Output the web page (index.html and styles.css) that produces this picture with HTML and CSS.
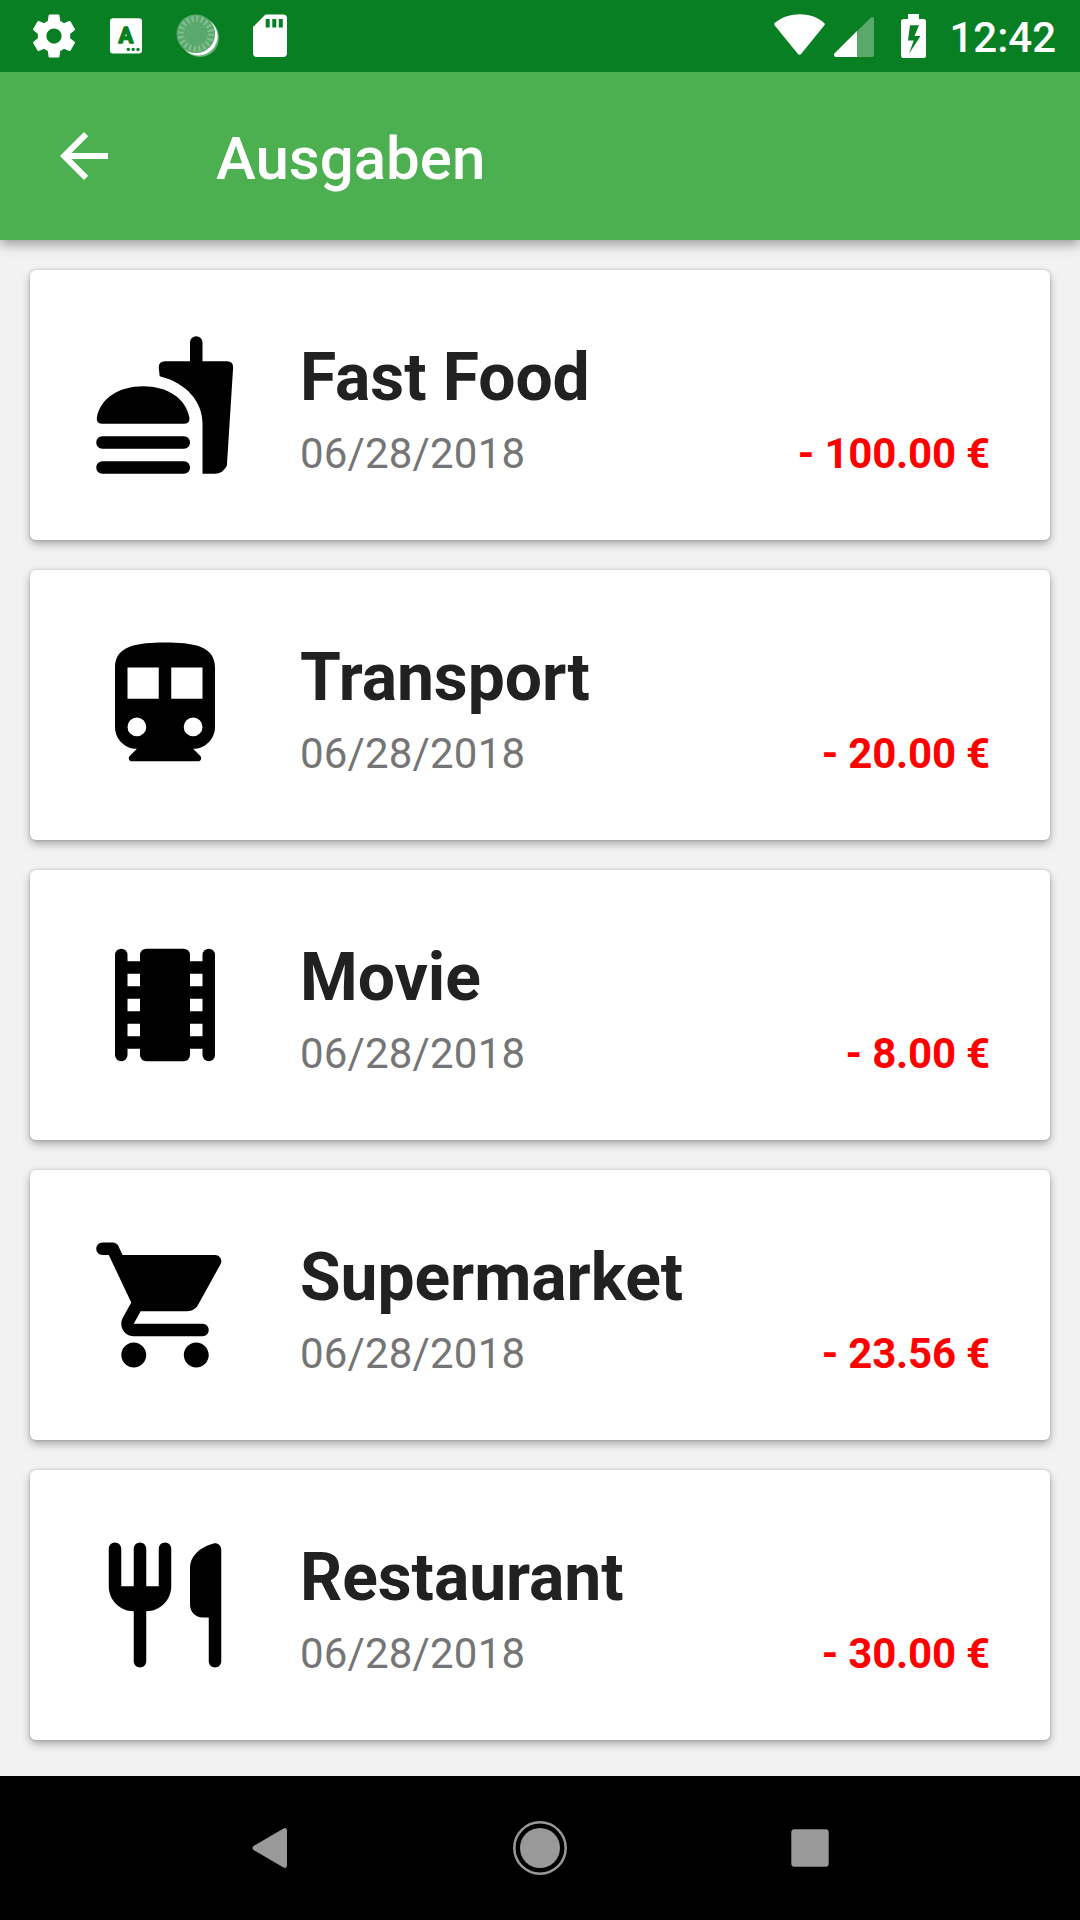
FILE: index.html
```html
<!DOCTYPE html>
<html lang="de">
<head>
<meta charset="utf-8">
<title>Ausgaben</title>
<link rel="stylesheet" href="styles.css">
</head>
<body>
<div class="status-bar">
  <div class="status-group">
    <svg class="status-icon" viewBox="0 0 72 72"><path fill="#fff" transform="translate(10.1 10.1) scale(2.16)" d="M19.43 12.98c.04-.32.07-.64.07-.98s-.03-.66-.07-.98l2.11-1.65c.19-.15.24-.42.12-.64l-2-3.46c-.12-.22-.39-.3-.61-.22l-2.49 1c-.52-.4-1.08-.73-1.69-.98l-.38-2.65C14.46 2.18 14.25 2 14 2h-4c-.25 0-.46.18-.49.42l-.38 2.65c-.61.25-1.17.59-1.69.98l-2.49-1c-.23-.09-.49 0-.61.22l-2 3.46c-.13.22-.07.49.12.64l2.11 1.65c-.04.32-.07.65-.07.98s.03.66.07.98l-2.11 1.65c-.19.15-.24.42-.12.64l2 3.46c.12.22.39.3.61.22l2.49-1c.52.4 1.08.73 1.69.98l.38 2.65c.03.24.24.42.49.42h4c.25 0 .46-.18.49-.42l.38-2.65c.61-.25 1.17-.59 1.69-.98l2.49 1c.23.09.49 0 .61-.22l2-3.46c.12-.22.07-.49-.12-.64l-2.11-1.65zM12 15.5c-1.93 0-3.5-1.57-3.5-3.5s1.57-3.5 3.5-3.5 3.5 1.57 3.5 3.5-1.57 3.5-3.5 3.5z"/></svg>
    <svg class="status-icon" viewBox="0 0 72 72"><rect x="20" y="18.3" width="32" height="35.3" rx="3" fill="#fff"/><text class="badge-letter" x="36" y="43" text-anchor="middle">A</text><g fill="#087f23"><circle cx="38.3" cy="49.4" r="1.7"/><circle cx="43.2" cy="49.4" r="1.7"/><circle cx="48" cy="49.4" r="1.7"/></g></svg>
    <svg class="status-icon" viewBox="0 0 72 72"><circle cx="37.8" cy="37.8" r="19.2" fill="#fff" opacity=".4"/><circle cx="36.4" cy="36.2" r="19.2" fill="#fff"/><circle cx="33.8" cy="33.8" r="19.3" fill="#5aa96c"/><circle cx="33.8" cy="33.8" r="15" fill="none" stroke="#84bf92" stroke-width="6" stroke-dasharray="2 2.712"/></svg>
    <svg class="status-icon" viewBox="0 0 72 72"><path fill="#fff" d="M31.5 14.5H49a4 4 0 0 1 4 4V53a4 4 0 0 1-4 4H23a4 4 0 0 1-4-4V27z"/><path fill="#087f23" d="M31.7 19h4v8.5h-4zM38.3 19h4v8.5h-4zM44.8 19h4v8.5h-4z"/></svg>
  </div>
  <div class="status-group">
    <svg class="wifi" viewBox="0 0 52 72"><path fill="#fff" d="M.8 25.5Q-.5 24 1 22.7C15 11.5 37 11.5 50 22.7Q51.5 24 50.2 25.5L27.5 53.5Q25.5 56 23.500 53.5z"/></svg>
    <svg class="signal" viewBox="0 0 40 72"><path fill="#fff" opacity=".33" d="M40 19v36a2 2 0 0 1-2 2H2q-3-.8-1.5-3.5L36.7 17.7Q39.5 16 40 19z"/><path fill="#fff" d="M23 31v26H2q-3-.8-1.5-3.5z"/></svg>
    <svg class="battery" viewBox="0 0 25 72"><path fill="#fff" fill-rule="evenodd" d="M7 14h11v5h4.5A2.5 2.5 0 0 1 25 21.5v34a2.5 2.5 0 0 1-2.5 2.5h-20A2.5 2.5 0 0 1 0 55.5v-34A2.5 2.5 0 0 1 2.5 19H7zM9 25.3 7 40.5h5.7L8 53.7 19.5 36h-6L18 25.3z"/></svg>
    <span class="clock">12:42</span>
  </div>
</div>
<header class="app-bar">
  <svg class="back" viewBox="0 0 24 24"><path fill="#fff" d="M20 11H7.83l5.59-5.59L12 4l-8 8 8 8 1.41-1.41L7.83 13H20v-2z"/></svg>
  <h1 class="app-title">Ausgaben</h1>
</header>
<main class="list">
  <article class="card">
    <svg class="card-icon" viewBox="0 0 24 24"><path d="M16 5V2a1 1 0 0 1 2 0v3h3.9q1 0 1 1l-1 15.7Q21.2 23 20 23h-2v-8c0-3.5-2.5-6.5-6.85-7.6L11 6q0-1 1-1zM1.08 14.1C1.6 10.9 4.7 9 8.5 9s6.9 1.9 7.42 5.1q0 .9-.9.9H1.98q-.9 0-.9-.9z"/><rect x="1" y="17" width="15" height="2" rx=".95"/><rect x="1" y="21" width="15" height="2" rx=".95"/></svg>
    <div class="info"><h2 class="name">Fast Food</h2><div class="details"><span class="date">06/28/2018</span><span class="amount">- 100.00 €</span></div></div>
  </article>
  <article class="card">
    <svg class="card-icon" viewBox="0 0 24 24"><path fill-rule="evenodd" d="M12 2C7.58 2 4 2.5 4 6v9.5C4 17.43 5.57 19 7.5 19l-1.15 1.15c-.3.3-.1.85.35.85h10.6c.45 0 .65-.54.35-.85L16.5 19c1.93 0 3.5-1.57 3.5-3.5V6c0-3.5-3.58-4-8-4zM6 6h5v5H6zM13 6h5v5h-5zM7.5 14a1.5 1.5 0 1 0 0 3 1.5 1.5 0 0 0 0-3zM16.5 14a1.5 1.5 0 1 0 0 3 1.5 1.5 0 0 0 0-3z"/></svg>
    <div class="info"><h2 class="name">Transport</h2><div class="details"><span class="date">06/28/2018</span><span class="amount">- 20.00 €</span></div></div>
  </article>
  <article class="card">
    <svg class="card-icon" viewBox="0 0 24 24"><rect x="4" y="3" width="2" height="18" rx="1"/><rect x="18" y="3" width="2" height="18" rx="1"/><rect x="8" y="3" width="8" height="18" rx="1"/><path d="M5 5h14v2H5zM5 9h14v2H5zM5 13h14v2H5zM5 17h14v2H5z"/></svg>
    <div class="info"><h2 class="name">Movie</h2><div class="details"><span class="date">06/28/2018</span><span class="amount">- 8.00 €</span></div></div>
  </article>
  <article class="card">
    <svg class="card-icon" viewBox="0 0 24 24"><path d="M7 18c-1.1 0-1.99.9-1.99 2S5.9 22 7 22s2-.9 2-2-.9-2-2-2zM1 3c0 .55.45 1 1 1h1l3.6 7.59-1.35 2.44C4.52 15.37 5.48 17 7 17h11c.55 0 1-.45 1-1s-.45-1-1-1H7l1.1-2h7.45c.75 0 1.41-.41 1.75-1.03l3.58-6.49c.37-.66-.11-1.48-.87-1.48H5.21l-.67-1.43c-.16-.35-.52-.57-.9-.57H2c-.55 0-1 .45-1 1zm16 15c-1.1 0-1.99.9-1.99 2s.89 2 1.99 2 2-.9 2-2-.9-2-2-2z"/></svg>
    <div class="info"><h2 class="name">Supermarket</h2><div class="details"><span class="date">06/28/2018</span><span class="amount">- 23.56 €</span></div></div>
  </article>
  <article class="card">
    <svg class="card-icon" viewBox="0 0 24 24"><path d="M16 6v6c0 1.1.9 2 2 2h1v7c0 .55.45 1 1 1s1-.45 1-1V3.13c0-.65-.61-1.13-1.24-.98C17.36 2.74 16 4.4 16 6zm-5 3H9V3c0-.55-.45-1-1-1s-1 .45-1 1v6H5V3c0-.55-.45-1-1-1s-1 .45-1 1v6c0 2.21 1.79 4 4 4v8c0 .55.45 1 1 1s1-.45 1-1v-8c2.21 0 4-1.79 4-4V3c0-.55-.45-1-1-1s-1 .45-1 1v6z"/></svg>
    <div class="info"><h2 class="name">Restaurant</h2><div class="details"><span class="date">06/28/2018</span><span class="amount">- 30.00 €</span></div></div>
  </article>
</main>
<nav class="nav-bar">
  <svg class="nav-icon" viewBox="0 0 60 60"><path d="M47 12.5v35q-.5 3.5-3.5 2L13.5 32Q11.500 30 13.5 28L43.5 10.5q3-1.5 3.5 2z"/></svg>
  <svg class="nav-icon" viewBox="0 0 60 60"><circle cx="30" cy="30" r="20"/><circle class="ring" cx="30" cy="30" r="25.7"/></svg>
  <svg class="nav-icon" viewBox="0 0 60 60"><rect x="11.3" y="11.3" width="37.4" height="37.4" rx="3"/></svg>
</nav>
</body>
</html>
```
FILE: styles.css
```css
* { box-sizing: border-box; }

body {
  margin: 0;
  width: 1080px;
  height: 1920px;
  display: flex;
  flex-direction: column;
  overflow: hidden;
  background: #f2f2f2;
  font-family: Roboto, "Noto Sans", sans-serif;
}

svg { display: block; flex: none; }
h1, h2 { margin: 0; }

.status-bar {
  position: relative;
  z-index: 2;
  height: 72px;
  flex: none;
  display: flex;
  justify-content: space-between;
  padding: 0 24px 0 18px;
  background: #087f23;
}

.status-group { display: flex; }
.status-icon { width: 72px; height: 72px; }
.badge-letter {
  font: 700 22px Roboto, sans-serif;
  fill: #087f23;
  stroke: #087f23;
  stroke-width: 1.5px;
  stroke-linejoin: round;
}

.wifi { width: 52px; height: 72px; margin-right: 8px; }
.signal { width: 40px; height: 72px; margin-right: 27px; }
.battery { width: 25px; height: 72px; margin-right: 23px; }
.clock {
  font-size: 42px;
  font-weight: 500;
  line-height: 76px;
  color: #fff;
}

.app-bar {
  position: relative;
  z-index: 1;
  height: 168px;
  flex: none;
  display: flex;
  align-items: center;
  gap: 96px;
  padding-left: 48px;
  background: #4caf50;
  box-shadow: 0 4px 12px rgba(0, 0, 0, .38);
}

.back { width: 72px; height: 72px; }
.app-title {
  font-size: 60px;
  font-weight: 500;
  line-height: 72px;
  color: #fff;
  padding-top: 6px;
}

.list {
  flex: 1;
  display: flex;
  flex-direction: column;
  gap: 30px;
  padding: 30px;
}

.card {
  height: 270px;
  flex: none;
  display: flex;
  align-items: center;
  gap: 60px;
  padding: 0 60px;
  background: #fff;
  border-radius: 6px;
  box-shadow: 0 4px 8px rgba(0, 0, 0, .3), 0 0 3px rgba(0, 0, 0, .18);
}

.card-icon { width: 150px; height: 150px; }
.info { flex: 1; padding-top: 8px; }
.name {
  font-size: 66px;
  font-weight: 700;
  line-height: 78px;
  letter-spacing: -.07px;
  color: #212121;
}
.details {
  display: flex;
  justify-content: space-between;
  font-size: 42px;
  line-height: 50px;
  padding-top: 12px;
}
.date { color: #757575; letter-spacing: .17px; }
.amount { color: #f00; font-weight: 700; letter-spacing: -.2px; }

.nav-bar {
  height: 144px;
  flex: none;
  display: flex;
  align-items: center;
  justify-content: center;
  gap: 210px;
  background: #000;
}
.nav-icon { width: 60px; height: 60px; fill: #999; }
.ring { fill: none; stroke: #999; stroke-width: 2.5px; }
```
